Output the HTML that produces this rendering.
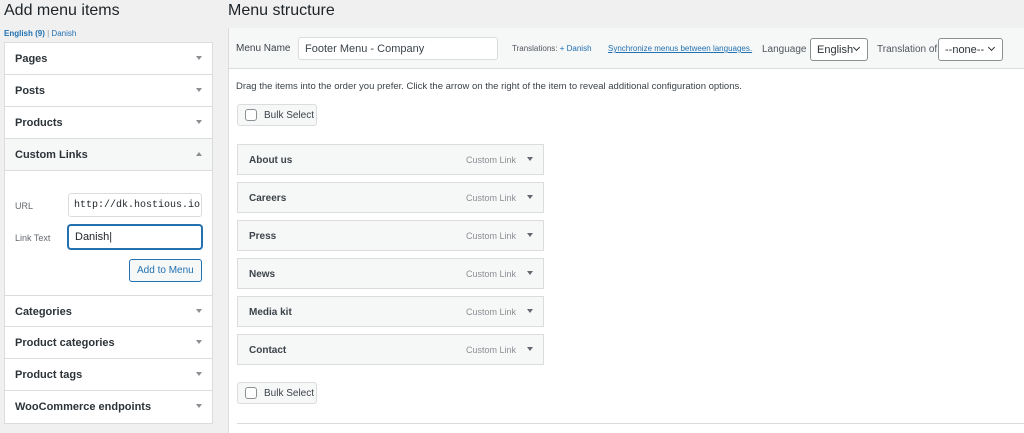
<!DOCTYPE html>
<html><head><style>
*{box-sizing:border-box;margin:0;padding:0}
body{width:1024px;height:433px;background:#f0f0f1;font-family:"Liberation Sans",sans-serif;color:#1d2327;position:relative;overflow:hidden;font-size:11px}
.abs{position:absolute}
h2{position:absolute;font-weight:400;font-size:16px;color:#1d2327}
.lp{position:absolute;left:4px;top:42px;width:209px;height:382px;background:#fff;border:1px solid #dcdcde}
.row{position:absolute;left:0;width:207px;height:32px;border-bottom:1px solid #dcdcde;font-weight:bold;font-size:11px;padding:10px 0 0 10px;color:#2c3338}
.arr{position:absolute;right:10px;top:13px;width:0;height:0;border-left:3px solid transparent;border-right:3px solid transparent;border-top:4px solid #8c8f94}
.up{border-top:none;border-bottom:4px solid #8c8f94}
.inp{position:absolute;background:#fff;border:1px solid #dcdcde;border-radius:3px;font-size:11px;padding-left:6px;overflow:hidden;white-space:nowrap}
.rp{position:absolute;left:228px;top:28px;width:796px;height:405px;background:#fff;border-left:1px solid #dcdcde}
.hdr{position:absolute;left:0;top:0;width:796px;height:41px;background:#f6f7f7;border-bottom:1px solid #dcdcde}
.item{position:absolute;left:8px;width:307px;height:31px;background:#f6f7f7;border:1px solid #dcdcde;font-weight:bold;font-size:10px;padding:10px 0 0 11px;color:#3c434a}
.item span{position:absolute;right:27px;top:10px;font-weight:400;color:#8c8f94;font-size:9px}
.item .arr{right:10px;top:12px;border-top-color:#646970}
.bulk{position:absolute;left:8px;width:80px;height:22px;background:#f6f7f7;border:1px solid #dcdcde;border-radius:3px;font-size:10px;padding:5px 0 0 26px;color:#3c434a}
.bulk i{position:absolute;left:7px;top:4px;width:12px;height:12px;border:1px solid #8c8f94;border-radius:3px;background:#fff}
.sel{position:absolute;top:10px;height:23px;background:#fff;border:1px solid #8c8f94;border-radius:3px;font-size:11px;padding:5px 0 0 6px;color:#2c3338;white-space:nowrap}
.chev{position:absolute;right:8px;top:6px;width:5px;height:5px;border-right:1.5px solid #2c3338;border-bottom:1.5px solid #2c3338;transform:rotate(45deg)}
</style></head><body>
<h2 style="left:4px;top:2px">Add menu items</h2>
<div class="abs" style="left:4px;top:29px;font-size:8px;color:#2271b1"><b>English (9)</b> <span style="color:#8c8f94">|</span> Danish</div>
<div class="lp">
<div class="row" style="top:0">Pages<i class="arr"></i></div>
<div class="row" style="top:32px">Posts<i class="arr"></i></div>
<div class="row" style="top:64px">Products<i class="arr"></i></div>
<div class="row" style="top:96px;background:#f6f7f7">Custom Links<i class="arr up"></i></div>
<div class="abs" style="left:10px;top:158px;font-size:9px;color:#646970">URL</div>
<div class="inp" style="left:63px;top:150px;width:134px;height:24px;font-family:'Liberation Mono',monospace;font-size:10px;padding:6px 0 0 5px">http://dk.hostious.io</div>
<div class="abs" style="left:10px;top:190px;font-size:9px;color:#646970">Link Text</div>
<div class="inp" style="left:63px;top:182px;width:134px;height:24px;border:1px solid #2271b1;box-shadow:0 0 0 1px #2271b1;padding-top:5px">Danish|</div>
<div class="inp" style="left:124px;top:216px;width:73px;height:23px;background:#f6f7f7;border-color:#2271b1;color:#2271b1;font-size:10px;padding:5px 0 0 7px">Add to Menu</div>
<div class="row" style="top:252px;border-top:1px solid #dcdcde">Categories<i class="arr"></i></div>
<div class="row" style="top:284px">Product categories<i class="arr"></i></div>
<div class="row" style="top:316px">Product tags<i class="arr"></i></div>
<div class="row" style="top:348px;border-bottom:none">WooCommerce endpoints<i class="arr"></i></div>
</div>
<h2 style="left:228px;top:2px">Menu structure</h2>
<div class="rp">
<div class="hdr">
<div class="abs" style="left:7px;top:15px;font-size:10px;color:#3c434a">Menu Name</div>
<div class="inp" style="left:69px;top:9px;width:200px;height:23px;font-size:11px;padding:5px 0 0 6px;color:#3c434a">Footer Menu - Company</div>
<div class="abs" style="left:283px;top:16px;font-size:8px;color:#50575e;white-space:nowrap">Translations: <span style="color:#2271b1">+ Danish</span></div>
<div class="abs" style="left:379px;top:16px;font-size:8px;color:#2271b1;text-decoration:underline;white-space:nowrap">Synchronize menus between languages.</div>
<div class="abs" style="left:533px;top:16px;font-size:10px;color:#50575e">Language</div>
<div class="sel" style="left:581px;width:58px">English<i class="chev"></i></div>
<div class="abs" style="left:648px;top:16px;font-size:10px;color:#50575e">Translation of</div>
<div class="sel" style="left:709px;width:65px">--none--<i class="chev"></i></div>
</div>
<div class="abs" style="left:7px;top:53px;font-size:9.5px;color:#3c434a">Drag the items into the order you prefer. Click the arrow on the right of the item to reveal additional configuration options.</div>
<div class="bulk" style="top:76px"><i></i>Bulk Select</div>
<div class="item" style="top:116px">About us<span>Custom Link</span><i class="arr"></i></div>
<div class="item" style="top:154px">Careers<span>Custom Link</span><i class="arr"></i></div>
<div class="item" style="top:192px">Press<span>Custom Link</span><i class="arr"></i></div>
<div class="item" style="top:230px">News<span>Custom Link</span><i class="arr"></i></div>
<div class="item" style="top:268px">Media kit<span>Custom Link</span><i class="arr"></i></div>
<div class="item" style="top:306px">Contact<span>Custom Link</span><i class="arr"></i></div>
<div class="bulk" style="top:354px"><i></i>Bulk Select</div>
<div class="abs" style="left:8px;top:395px;width:788px;height:1px;background:#dcdcde"></div>
</div>
</body></html>
